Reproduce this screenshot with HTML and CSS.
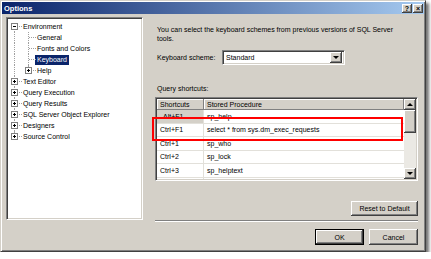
FILE: index.html
```html
<!DOCTYPE html>
<html lang="en">
<head>
    <meta charset="UTF-8">
    <title>Options</title>
    <link rel="stylesheet" href="styles.css">
</head>
<body>
    <div class="dialog">
        <div class="titlebar">
            <span class="title">Options</span>
            <span class="cap-btns">
                <span class="cap-btn">?</span>
                <span class="cap-btn">×</span>
            </span>
        </div>
        <div class="main">
            <div class="tree">
                <div class="node"><span class="joint first"><span class="box"></span></span><span class="label">Environment</span></div>
                <div class="node"><span class="pipe"></span><span class="joint"></span><span class="label">General</span></div>
                <div class="node"><span class="pipe"></span><span class="joint"></span><span class="label">Fonts and Colors</span></div>
                <div class="node"><span class="pipe"></span><span class="joint"></span><span class="label selected">Keyboard</span></div>
                <div class="node"><span class="pipe"></span><span class="joint last"><span class="box plus"></span></span><span class="label">Help</span></div>
                <div class="node"><span class="joint"><span class="box plus"></span></span><span class="label">Text Editor</span></div>
                <div class="node"><span class="joint"><span class="box plus"></span></span><span class="label">Query Execution</span></div>
                <div class="node"><span class="joint"><span class="box plus"></span></span><span class="label">Query Results</span></div>
                <div class="node"><span class="joint"><span class="box plus"></span></span><span class="label">SQL Server Object Explorer</span></div>
                <div class="node"><span class="joint"><span class="box plus"></span></span><span class="label">Designers</span></div>
                <div class="node"><span class="joint last"><span class="box plus"></span></span><span class="label">Source Control</span></div>
            </div>

            <div class="pane">
                <p class="desc">You can select the keyboard schemes from previous versions of SQL Server tools.</p>
                <div class="scheme">
                    <span class="scheme-label">Keyboard scheme:</span>
                    <div class="combo">
                        <span class="combo-text">Standard</span>
                        <span class="combo-arrow"><span class="tri-down"></span></span>
                    </div>
                </div>
                <div class="caption">Query shortcuts:</div>
                <div class="grid">
                    <div class="grid-body">
                        <div class="row head">
                            <span class="cell key">Shortcuts</span>
                            <span class="cell proc">Stored Procedure</span>
                        </div>
                        <div class="row">
                            <span class="cell key current">Alt+F1</span>
                            <span class="cell proc">sp_help</span>
                        </div>
                        <div class="row">
                            <span class="cell key">Ctrl+F1</span>
                            <span class="cell proc">select * from sys.dm_exec_requests</span>
                        </div>
                        <div class="row">
                            <span class="cell key">Ctrl+1</span>
                            <span class="cell proc">sp_who</span>
                        </div>
                        <div class="row">
                            <span class="cell key">Ctrl+2</span>
                            <span class="cell proc">sp_lock</span>
                        </div>
                        <div class="row">
                            <span class="cell key">Ctrl+3</span>
                            <span class="cell proc">sp_helptext</span>
                        </div>
                        <div class="row">
                            <span class="cell key"></span>
                            <span class="cell proc"></span>
                        </div>
                    </div>
                    <div class="vscroll">
                        <span class="sb-btn"><span class="tri-up"></span></span>
                        <span class="thumb"></span>
                        <span class="track"></span>
                        <span class="sb-btn"><span class="tri-down"></span></span>
                    </div>
                    <div class="highlight"></div>
                </div>
                <button class="btn reset">Reset to Default</button>
                <div class="separator"></div>
                <div class="actions">
                    <button class="btn default">OK</button>
                    <button class="btn">Cancel</button>
                </div>
            </div>
        </div>
    </div>
</body>
</html>
```

FILE: styles.css
```css
body {
    margin: 0;
    background: #fff;
    font-family: "Liberation Sans", Arial, sans-serif;
    font-size: 7px;
    color: #000;
}

.dialog {
    width: 426px;
    height: 252px;
    box-sizing: border-box;
    background: #d4d0c8;
    border: 1px solid;
    border-color: #d4d0c8 #404040 #404040 #d4d0c8;
    box-shadow: inset 1px 1px #fff, inset -1px -1px #808080, 3px 3px 3px rgba(0, 0, 0, 0.55);
    display: flex;
    flex-direction: column;
}

/* title bar */
.titlebar {
    height: 12px;
    margin: 1px 1px 0;
    padding-left: 2px;
    background: linear-gradient(to right, #0a246a, #a6caf0);
    display: flex;
    align-items: center;
}

.title {
    color: #fff;
    font-weight: bold;
    font-size: 7.5px;
}

.cap-btns {
    margin-left: auto;
    margin-right: 1px;
    display: flex;
    gap: 1px;
}

.cap-btn {
    width: 10px;
    height: 9px;
    background: #d4d0c8;
    box-shadow: inset -1px -1px #404040, inset 1px 1px #fff, inset -2px -2px #808080;
    font-size: 7px;
    font-weight: bold;
    line-height: 9px;
    text-align: center;
}

.main {
    display: flex;
    padding: 3px 0 0 5px;
}

/* tree */
.tree {
    width: 137px;
    height: 203px;
    box-sizing: border-box;
    background: #fff;
    border: 1px solid;
    border-color: #808080 #fff #fff #808080;
    box-shadow: inset 1px 1px #404040, inset -1px -1px #d4d0c8;
    padding: 3px 0 0 1px;
}

.node {
    display: flex;
    height: 11px;
    align-items: center;
}

.pipe,
.joint {
    position: relative;
    width: 14px;
    height: 11px;
    flex: none;
}

.pipe::before,
.joint::before {
    content: "";
    position: absolute;
    left: 6px;
    top: 0;
    bottom: 0;
    border-left: 1px dotted #a0a0a0;
}

.joint.first::before {
    top: 5px;
}

.joint.last::before {
    bottom: 5px;
}

.joint::after {
    content: "";
    position: absolute;
    left: 7px;
    right: 0;
    top: 5px;
    border-top: 1px dotted #a0a0a0;
}

.box {
    position: absolute;
    left: 3px;
    top: 2px;
    width: 7px;
    height: 7px;
    box-sizing: border-box;
    border: 1px solid #808080;
    background: #fff;
    z-index: 1;
}

.box::before {
    content: "";
    position: absolute;
    left: 1px;
    top: 2px;
    width: 3px;
    height: 1px;
    background: #000;
}

.box.plus::after {
    content: "";
    position: absolute;
    left: 2px;
    top: 1px;
    width: 1px;
    height: 3px;
    background: #000;
}

.label {
    line-height: 10px;
    padding: 0 1px;
    white-space: nowrap;
}

.label.selected {
    background: #0a246a;
    color: #fff;
    padding: 0 2px;
    margin-left: -1px;
}

/* right pane */
.pane {
    width: 263px;
    margin-left: 12px;
    display: flex;
    flex-direction: column;
}

.desc {
    margin: 8px 0 0 2px;
    width: 250px;
    line-height: 9px;
}

.scheme {
    display: flex;
    align-items: center;
    margin: 7px 0 0 2px;
}

.scheme-label {
    width: 65px;
}

.combo {
    width: 123px;
    height: 15px;
    box-sizing: border-box;
    background: #fff;
    border: 1px solid;
    border-color: #808080 #fff #fff #808080;
    box-shadow: inset 1px 1px #404040, inset -1px -1px #d4d0c8;
    display: flex;
    align-items: center;
    padding: 2px;
}

.combo-text {
    flex: 1;
    padding-left: 1px;
}

.combo-arrow {
    width: 12px;
    height: 11px;
    background: #d4d0c8;
    box-shadow: inset -1px -1px #404040, inset 1px 1px #fff, inset -2px -2px #808080;
    display: flex;
    align-items: center;
    justify-content: center;
}

.tri-down,
.tri-up {
    width: 0;
    height: 0;
    border-left: 3px solid transparent;
    border-right: 3px solid transparent;
}

.tri-down {
    border-top: 3px solid #000;
}

.tri-up {
    border-bottom: 3px solid #000;
}

.caption {
    margin: 19px 0 0 2px;
    line-height: 9px;
}

/* shortcuts grid */
.grid {
    position: relative;
    margin-top: 4px;
    height: 84px;
    box-sizing: border-box;
    background: #fff;
    border: 1px solid;
    border-color: #808080 #fff #fff #808080;
    box-shadow: inset 1px 1px #404040, inset -1px -1px #d4d0c8;
    padding: 1px;
    display: flex;
}

.grid-body {
    flex: 1;
    overflow: hidden;
}

.row {
    display: flex;
    height: 13.5px;
    box-sizing: border-box;
    border-bottom: 1px solid #e2e0da;
}

.row.head {
    height: 11px;
    border-bottom: none;
}

.cell {
    box-sizing: border-box;
    padding-left: 3px;
    display: flex;
    align-items: center;
    white-space: nowrap;
}

.cell.key {
    width: 47px;
    border-right: 1px solid #e2e0da;
}

.cell.proc {
    flex: 1;
}

.head .cell {
    background: #d4d0c8;
    box-shadow: inset -1px -1px #808080, inset 1px 1px #fff;
    border-right: none;
}

.cell.current {
    background: #d4d0c8;
    padding-left: 6px;
}

.vscroll {
    width: 12px;
    display: flex;
    flex-direction: column;
    background: #ebe9e4;
}

.sb-btn,
.thumb {
    background: #d4d0c8;
    box-shadow: inset -1px -1px #404040, inset 1px 1px #fff, inset -2px -2px #808080;
}

.sb-btn {
    height: 11px;
    display: flex;
    align-items: center;
    justify-content: center;
}

.thumb {
    height: 23px;
}

.track {
    flex: 1;
}

.highlight {
    position: absolute;
    left: -4px;
    top: 19px;
    width: 251px;
    height: 24px;
    box-sizing: border-box;
    border: 2px solid #f00;
}

/* buttons */
.btn {
    font-family: inherit;
    font-size: 7px;
    height: 15px;
    padding: 0;
    border: none;
    background: #d4d0c8;
    box-shadow: inset -1px -1px #404040, inset 1px 1px #fff, inset -2px -2px #808080;
    color: #000;
}

.reset {
    align-self: flex-end;
    width: 67px;
    margin-top: 20px;
}

.separator {
    margin-top: 4px;
    border-top: 1px solid #808080;
    border-bottom: 1px solid #fff;
}

.actions {
    margin-top: 7px;
    display: flex;
    justify-content: flex-end;
    gap: 5px;
}

.actions .btn {
    width: 49px;
    height: 16px;
}

.btn.default {
    border: 1px solid #000;
    box-shadow: inset -1px -1px #404040, inset 1px 1px #fff, inset -2px -2px #808080;
}
```
